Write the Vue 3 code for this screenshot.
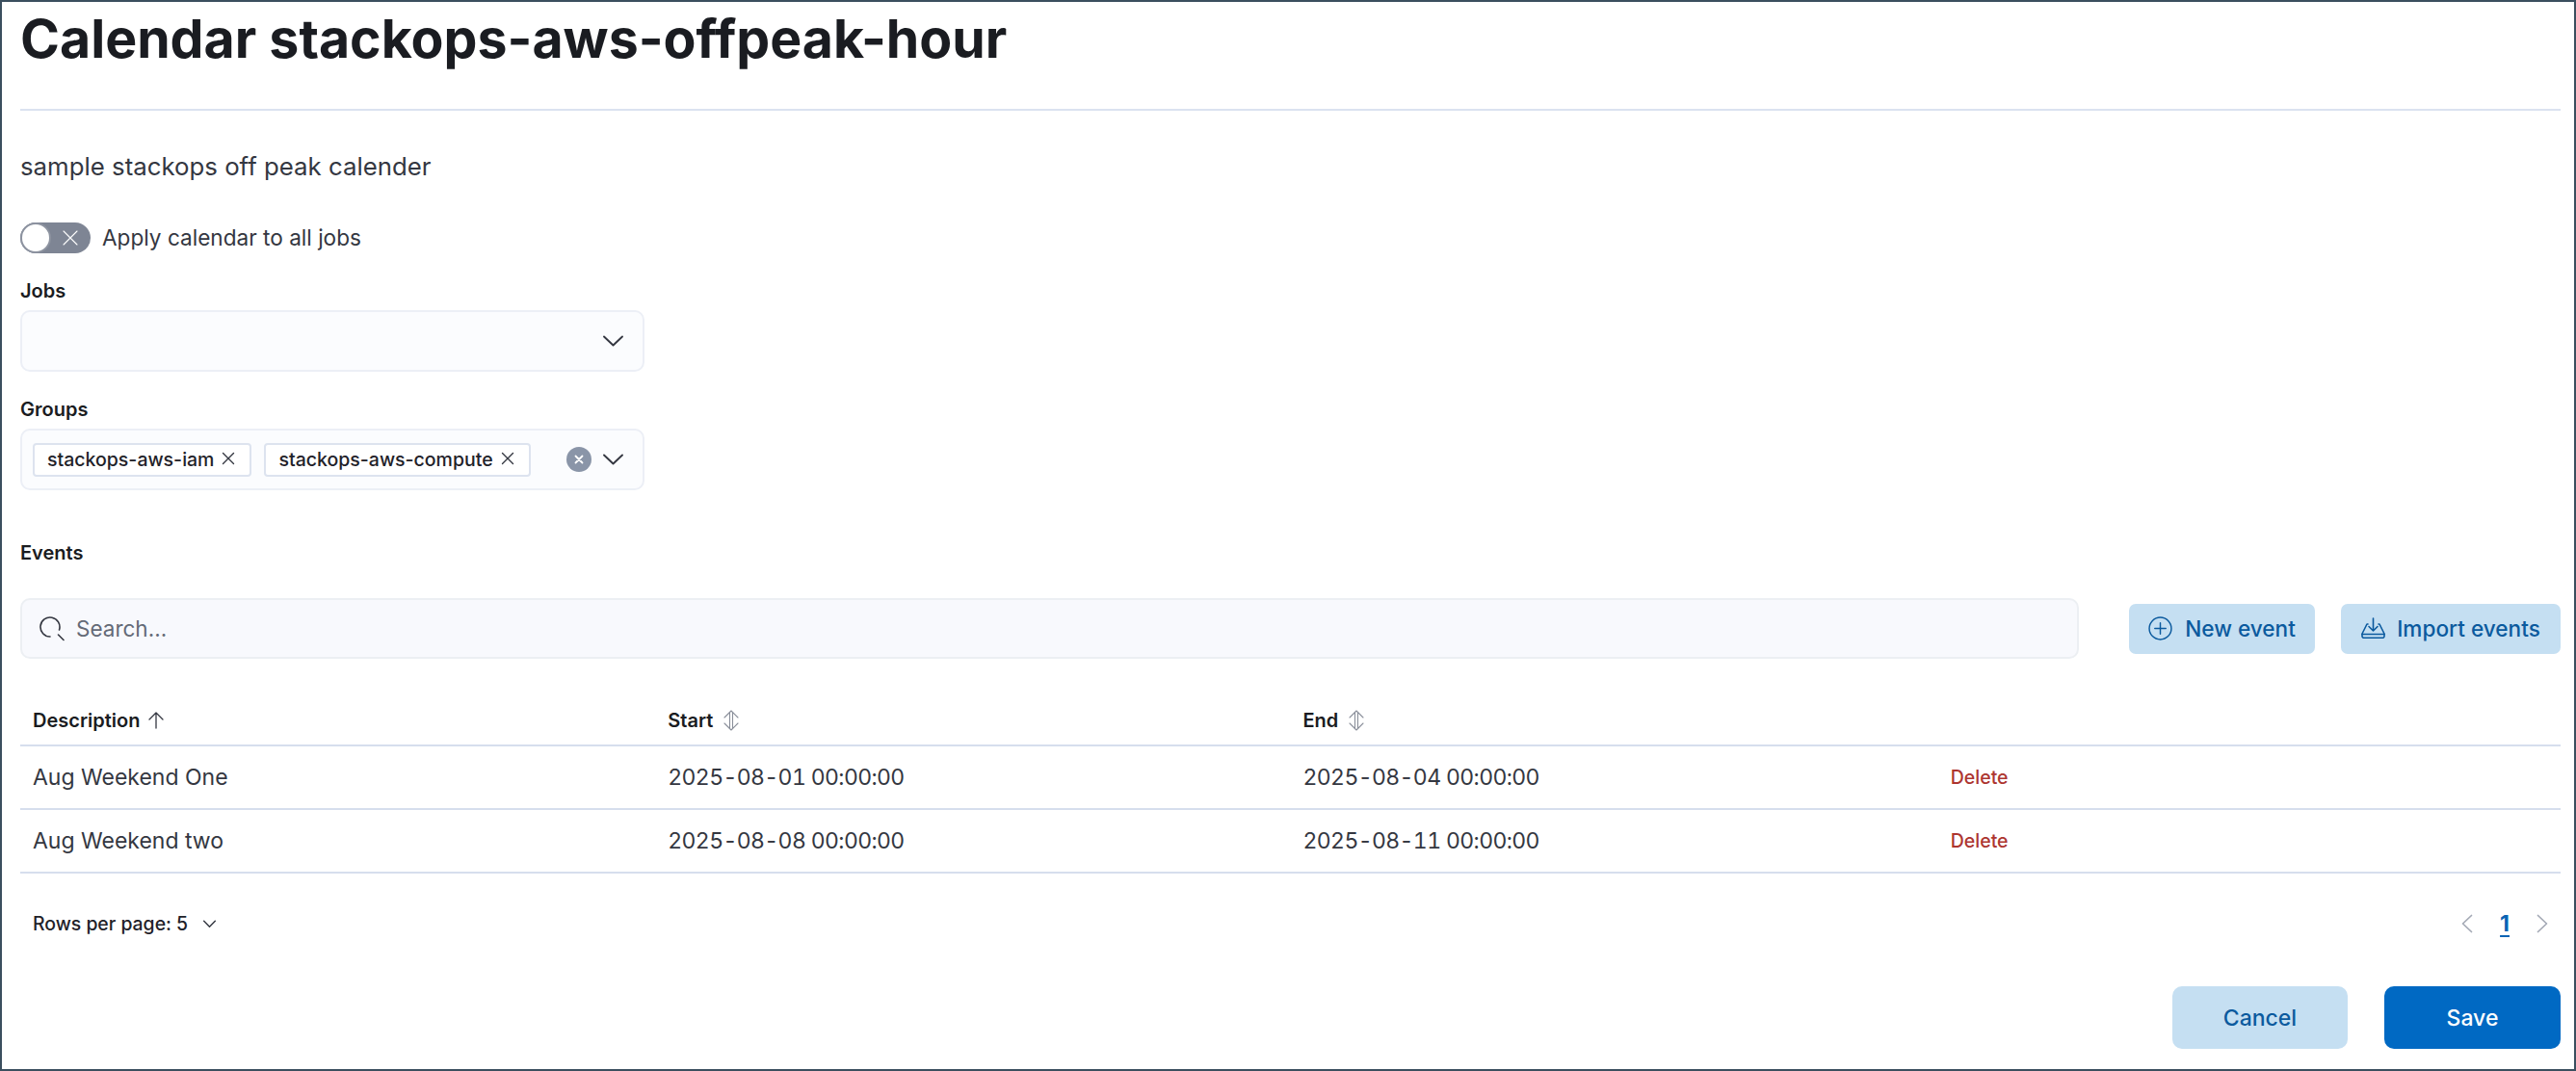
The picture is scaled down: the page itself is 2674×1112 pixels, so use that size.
<script setup>
const columns = [
  { label: 'Description', sort: 'up' },
  { label: 'Start', sort: 'both' },
  { label: 'End', sort: 'both' },
  { label: '', sort: '' },
]
const rows = [
  { name: 'Aug Weekend One', start: '2025-08-01 00:00:00', end: '2025-08-04 00:00:00' },
  { name: 'Aug Weekend two', start: '2025-08-08 00:00:00', end: '2025-08-11 00:00:00' },
]
const groups = ['stackops-aws-iam', 'stackops-aws-compute']
</script>

<template>
  <div class="page">
    <header class="head">
      <h1 class="title">Calendar stackops-aws-offpeak-hour</h1>
    </header>
    <p class="desc">sample stackops off peak calender</p>

    <div class="switch-row">
      <span class="switch">
        <span class="knob"></span>
        <svg class="switch-x" viewBox="0 0 16 16" fill="none" stroke="#fff" stroke-width="1.1" stroke-linecap="round"><path d="M1 1l14 14M15 1L1 15" /></svg>
      </span>
      <span class="switch-label">Apply calendar to all jobs</span>
    </div>

    <label class="label first">Jobs</label>
    <div class="combo">
      <div class="combo-values"></div>
      <svg class="chev" viewBox="0 0 22 12" fill="none" stroke="#343741" stroke-width="1.9" stroke-linecap="round" stroke-linejoin="round"><path d="M1.5 1.5L11 10.5l9.5-9" /></svg>
    </div>

    <label class="label">Groups</label>
    <div class="combo">
      <div class="combo-values">
        <span v-for="g in groups" :key="g" class="chip">
          <span class="chip-text">{{ g }}</span>
          <svg class="chip-x" viewBox="0 0 14 14" fill="none" stroke="#343741" stroke-width="1.4" stroke-linecap="round"><path d="M1.5 1.5l11 11M12.5 1.5l-11 11" /></svg>
        </span>
      </div>
      <span class="clear">
        <svg viewBox="0 0 10 10" fill="none" stroke="#fff" stroke-width="1.8" stroke-linecap="round"><path d="M1.5 1.5l7 7M8.5 1.5l-7 7" /></svg>
      </span>
      <svg class="chev" viewBox="0 0 22 12" fill="none" stroke="#343741" stroke-width="1.9" stroke-linecap="round" stroke-linejoin="round"><path d="M1.5 1.5L11 10.5l9.5-9" /></svg>
    </div>

    <label class="label events">Events</label>
    <div class="toolbar">
      <div class="search">
        <svg class="search-icon" viewBox="0 0 26 26" fill="none" stroke="#343741" stroke-width="1.6" stroke-linecap="round"><path d="M11 21A10 10 0 1 1 20.5 14" /><path d="M19.500 19L25 24.500" /></svg>
        <span class="search-text">Search...</span>
      </div>
      <button class="btn-light small new-event">
        <svg class="btn-icon" viewBox="0 0 24 24" fill="none" stroke="currentColor" stroke-width="1.4" stroke-linecap="round"><circle cx="12" cy="12" r="11" /><path d="M12 6.5v11M6.5 12h11" /></svg>
        New event
      </button>
      <button class="btn-light small import">
        <svg class="btn-icon import-icon" viewBox="0 0 25 22" fill="none" stroke="currentColor" stroke-width="1.6" stroke-linecap="round" stroke-linejoin="round"><path d="M12.500 1V14M8 9.500l4.500 4.500 4.500-4.500" /><path d="M7 7H6L1 17v2.500a1.800 1.800 0 0 0 1.800 1.800h19.400a1.800 1.800 0 0 0 1.800-1.800V17L19 7h-1" /><path d="M1 17.500h23" /></svg>
        Import events
      </button>
    </div>

    <table class="table">
      <thead>
        <tr>
          <th v-for="c in columns" :key="c.label">
            <span class="th-inner">
              {{ c.label }}
              <svg v-if="c.sort === 'up'" class="sort up" viewBox="0 0 20 20" fill="none" stroke="#343741" stroke-width="1.3" stroke-linecap="round" stroke-linejoin="round"><path d="M10 18V2M3 9l7-7 7 7" /></svg>
              <svg v-else-if="c.sort === 'both'" class="sort both" viewBox="0 0 16 22" fill="none" stroke="#8a8f9a" stroke-width="1.1" stroke-linecap="round" stroke-linejoin="round"><path d="M1 8l7-7 7 7M1 14l7 7 7-7M6.500 3v16M9.500 3v16" /></svg>
            </span>
          </th>
        </tr>
      </thead>
      <tbody>
        <tr v-for="r in rows" :key="r.name">
          <td>{{ r.name }}</td>
          <td class="date">{{ r.start }}</td>
          <td class="date">{{ r.end }}</td>
          <td class="del">Delete</td>
        </tr>
      </tbody>
    </table>

    <div class="pager">
      <span class="per-page">
        Rows per page: 5
        <svg class="per-chev" viewBox="0 0 16 10" fill="none" stroke="#343741" stroke-width="1.6" stroke-linecap="round" stroke-linejoin="round"><path d="M1.500 1.500L8 8l6.500-6.500" /></svg>
      </span>
      <span class="pages">
        <svg class="page-chev" viewBox="0 0 12 20" fill="none" stroke="#a4a9b5" stroke-width="1.700" stroke-linecap="round" stroke-linejoin="round"><path d="M10.500 1.500L1.500 10l9 8.500" /></svg>
        <span class="page-num">1</span>
        <svg class="page-chev" viewBox="0 0 12 20" fill="none" stroke="#a4a9b5" stroke-width="1.700" stroke-linecap="round" stroke-linejoin="round"><path d="M1.500 1.500L10.500 10l-9 8.500" /></svg>
      </span>
    </div>

    <footer class="footer">
      <button class="btn-light big">Cancel</button>
      <button class="btn-solid big">Save</button>
    </footer>
  </div>
</template>

<style>
html, body { margin: 0; background: #fff; }
</style>

<style scoped>
.page {
  box-sizing: border-box;
  width: 2674px;
  height: 1112px;
  border: 2px solid #3b4f5f;
  padding: 0 14px 0 19px;
  background: #fff;
  font-family: Inter, "Liberation Sans", sans-serif;
  color: #343741;
  overflow: hidden;
}
.head {
  box-sizing: border-box;
  height: 113px;
  padding-top: 8px;
  border-bottom: 2px solid #dbe2f0;
}
.title {
  margin: 0;
  font-size: 55.4px;
  line-height: 60px;
  font-weight: 700;
  color: #1a1c21;
}
.desc {
  margin: 43px 0 0;
  font-size: 25.8px;
  line-height: 30px;
  color: #343741;
}
.switch-row {
  display: flex;
  align-items: center;
  gap: 12px;
  height: 32px;
  margin-top: 43px;
}
.switch {
  position: relative;
  box-sizing: border-box;
  display: block;
  width: 73px;
  height: 32px;
  border-radius: 16px;
  background: #7e8594;
}
.knob {
  position: absolute;
  left: 0;
  top: 0;
  box-sizing: border-box;
  width: 32px;
  height: 32px;
  border-radius: 50%;
  background: #fff;
  border: 2px solid #8d93a0;
}
.switch-x {
  position: absolute;
  left: 44px;
  top: 8px;
  width: 16px;
  height: 16px;
}
.switch-label {
  font-size: 22.6px;
  line-height: 32px;
}
.label {
  display: block;
  margin-top: 27px;
  margin-bottom: 8px;
  font-size: 20px;
  line-height: 24px;
  font-weight: 600;
  color: #1a1c21;
}
.label.events {
  margin-top: 53px;
  margin-bottom: 35px;
}
.combo {
  box-sizing: border-box;
  display: flex;
  align-items: center;
  width: 648px;
  height: 64px;
  padding: 0 19px 0 11px;
  border: 2px solid #eceff6;
  border-radius: 10px;
  background: #fbfcfe;
}
.combo-values {
  flex: 1;
  display: flex;
  gap: 13px;
}
.chev {
  display: block;
  width: 23px;
  height: 12px;
  margin-left: 11px;
}
.chip {
  box-sizing: border-box;
  display: flex;
  align-items: center;
  height: 35px;
  padding: 0 15px 0 13px;
  gap: 8px;
  background: #fff;
  border: 2px solid #dde3ef;
  border-radius: 4px;
}
.chip-text {
  font-size: 19.5px;
  font-weight: 500;
  line-height: 28px;
  color: #1f2229;
  white-space: nowrap;
}
.chip-x {
  display: block;
  width: 14px;
  height: 14px;
  margin-top: -3px;
}
.clear {
  display: flex;
  align-items: center;
  justify-content: center;
  width: 26px;
  height: 26px;
  border-radius: 50%;
  background: #8a95a8;
}
.clear svg {
  width: 10px;
  height: 10px;
}
.toolbar {
  display: flex;
  align-items: center;
  height: 63px;
}
.search {
  box-sizing: border-box;
  flex: 1;
  display: flex;
  align-items: center;
  height: 63px;
  padding-left: 18px;
  margin-right: 52px;
  border: 2px solid #eceff3;
  border-radius: 10px;
  background: #f8f9fd;
}
.search-icon {
  display: block;
  width: 26px;
  height: 26px;
}
.search-text {
  margin-left: 12px;
  font-size: 22.5px;
  color: #646a77;
}
.btn-light,
.btn-solid {
  box-sizing: border-box;
  display: flex;
  align-items: center;
  justify-content: center;
  border: 0;
  font-family: inherit;
  font-weight: 500;
}
.btn-light {
  background: #c5dff2;
  color: #0b5a9e;
}
.small {
  height: 52px;
  border-radius: 7px;
  font-size: 22.6px;
  gap: 13px;
}
.new-event {
  width: 193px;
}
.import {
  width: 228px;
  margin-left: 27px;
  gap: 12px;
}
.btn-icon {
  display: block;
  width: 25px;
  height: 25px;
}
.btn-icon.import-icon {
  height: 22px;
  margin-top: -2px;
}
.table {
  width: 100%;
  margin-top: 39px;
  table-layout: fixed;
  border-collapse: separate;
  border-spacing: 0;
}
.table th {
  height: 50px;
  padding: 0 13px;
  border-bottom: 2px solid #d6deed;
  text-align: left;
  font-size: 20px;
  font-weight: 600;
  color: #1a1c21;
}
.th-inner {
  display: flex;
  align-items: center;
  gap: 11px;
}
.sort {
  display: block;
  width: 20px;
  height: 20px;
}
.sort.up {
  margin-left: -4px;
}
.sort.both {
  width: 16px;
  height: 22px;
}
.table td {
  height: 64px;
  padding: 0 13px;
  border-bottom: 2px solid #d6deed;
  font-size: 23px;
  color: #343741;
}
.table td.date {
  font-variant-numeric: tabular-nums;
  letter-spacing: -0.62px;
}
.table td.del {
  padding-left: 26px;
  font-size: 19.5px;
  font-weight: 500;
  color: #ad3530;
}
.pager {
  display: flex;
  align-items: center;
  justify-content: space-between;
  height: 40px;
  margin-top: 32px;
  padding: 0 13px;
}
.per-page {
  display: flex;
  align-items: center;
  gap: 15px;
  font-size: 19.4px;
  font-weight: 500;
  color: #1f2229;
}
.per-chev {
  display: block;
  width: 15px;
  height: 9px;
}
.pages {
  display: flex;
  align-items: center;
  gap: 28px;
}
.page-chev {
  display: block;
  width: 12px;
  height: 20px;
}
.page-num {
  font-size: 23px;
  font-weight: 700;
  color: #0b64b4;
  text-decoration: underline;
  text-underline-offset: 4px;
}
.footer {
  display: flex;
  justify-content: flex-end;
  gap: 38px;
  margin-top: 45px;
}
.big {
  width: 182px;
  height: 65px;
  border-radius: 10px;
  font-size: 23px;
}
.btn-solid {
  width: 183px;
  background: #0069c3;
  color: #fff;
}
</style>
